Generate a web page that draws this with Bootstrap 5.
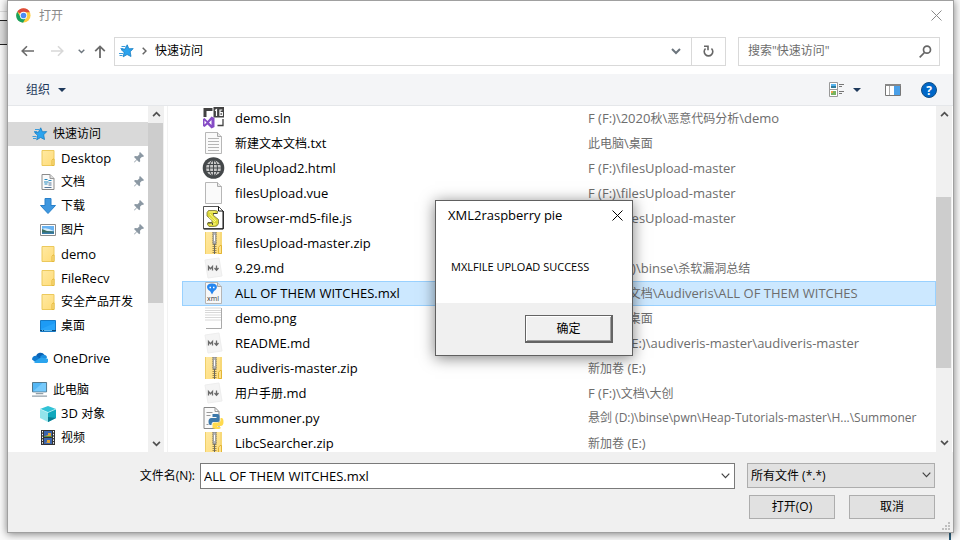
<!DOCTYPE html>
<html lang="zh-CN">
<head>
<meta charset="utf-8">
<meta name="viewport" content="width=device-width, initial-scale=1">
<title>打开</title>
<link rel="stylesheet" href="https://cdn.jsdelivr.net/npm/bootstrap@5.3.0/dist/css/bootstrap.min.css">
<style>
:root{--edge:#d9d9d9;--panel:#f0f0f0;--thumb:#cdcdcd;--navy:#1e395b}
body{font:13px/16px "Open Sans","Noto Sans CJK SC",sans-serif;color:#000;height:100vh;background:#fafafa;overflow:hidden}
button,input,select{font:inherit;color:inherit;border-radius:0}
svg{display:block;flex:none}
.stage{height:100%;padding:0 6px 7px 7px;background:#fafafa}
.back-line{top:11px;left:0;width:8px;height:1px;background:#ddd}
.back-button{top:20px;left:0;width:12px;height:25px;border:1px solid #222;border-left:0;background:#ddd}
.back-edge{bottom:0;right:9px;width:2px;height:8px;background:#2c5f7c}
.window{height:100%;background:#fff;border:1px solid #a0a0a0;box-shadow:0 1px 8px rgba(0,0,0,.5)}
.cjk,.files td.long-path{font-size:12px}
.title-bar{height:30px;padding:0 11px 0 8px;color:#8a8a8a}
.plain{border:0;background:none;padding:0}
.nav-row{height:44px;padding:6px 13px 8px 13px}
.arrows{width:93px;padding-right:8px}
.address{border:1px solid var(--edge)}
.address-path{padding-left:4px;padding-right:10px}
.refresh{width:34px;border-left:1px solid var(--edge)}
.search-box{width:202px;margin-left:12px;border:1px solid var(--edge);padding:0 7px 0 9px}
.search-box input{border:0;outline:0;padding:0;min-width:0;color:#6d6d6d}
.search-box input::placeholder{color:#6d6d6d;opacity:1}
.tool-bar{height:32px;background:#f4f5f7;border-bottom:1px solid #e5e7ea;color:var(--navy);padding:0 16px 0 18px}
.main-area{min-height:0;padding-right:1px}
.side{width:140px;padding-top:16px}
.side a{display:flex;align-items:center;height:24px;color:#000;text-decoration:none;padding-left:32px;gap:5px;white-space:nowrap}
.side a.root{padding-left:24px}
.side a.current{background:#d9d9d9}
.side a.space{margin-top:8px}
.side .pin{margin-left:auto;margin-right:4px}
.scroll{width:16px;background:var(--panel)}
.scroll button{height:17px;color:#505050}
.thumb{background:var(--thumb);margin-right:1px}
.side-thumb{flex:180}.side-rest{flex:132}
.list-top{flex:74}.list-thumb{flex:171}.list-rest{flex:67}
.divider-line{width:4px;border-right:1px solid #f2f2f2}
.files{padding-left:14px}
.files table{table-layout:fixed;width:100%;border-collapse:collapse}
.files td{height:25px;padding:0;white-space:nowrap}
.files col.name{width:406px}
.files tr.picked{background:#cce8ff;outline:1px solid #99d1ff;outline-offset:-1px}
.files .item{display:flex;align-items:center;gap:10px;padding-left:20px}
.files td:last-child{color:#6d6d6d}
.bottom{background:var(--panel);padding:11px 18px 13px 16px;gap:6px}
.name-label{width:176px;text-align:right;padding-right:5px}
.name-box{height:26px;border:1px solid #7a7a7a;background:#fff;padding-right:4px}
.name-box input{border:0;outline:0;padding:0 3px;min-width:0}
.name-box button,.kind{color:#444}
.kind{position:relative;width:188px;margin-left:12px}
.kind select{appearance:none;width:100%;height:25px;border:1px solid #adadad;background:#e1e1e1;padding:0 3px}
.kind svg{position:absolute;right:4px;top:9px;pointer-events:none}
.pushes{gap:14px}
.push{width:86px;height:24px;border:1px solid #adadad;background:#e1e1e1;padding:0}
.grip{position:absolute;right:3px;bottom:2px}
.message{position:absolute;left:427px;top:199px;width:198px;background:#fff;border:1px solid #606060;box-shadow:0 2px 14px rgba(0,0,0,.5)}
.message header{padding:6px 9px 6px 12px}
.message p{padding:30px 15px 28px;margin:0;font-size:11px}
.message footer{background:var(--panel);padding:12px 19px}
.confirm{width:88px;height:28px;border:1px solid #646464;border-right-width:2px;border-bottom-width:2px;background:#f0f0f0;box-shadow:inset 1px 1px #fff,inset -1px -1px #a0a0a0;padding:0}
</style>
<script src="https://cdn.jsdelivr.net/npm/bootstrap@5.3.0/dist/js/bootstrap.bundle.min.js"></script>
</head>
<body>
<svg width="0" height="0" class="position-absolute" aria-hidden="true">
<defs><linearGradient id="fg" x2="1" y2="1"><stop stop-color="#ffe9a2"/><stop offset="1" stop-color="#ffdc78"/></linearGradient></defs>
<symbol id="i-star" viewBox="0 0 15 14"><path d="M8.2.8 9.9 4.800l4.300-.2-3 3.200.8 4.700-3.900-2-3.900 2.300.9-4.500-3-2.700 3.900-.5z" fill="#2ba3ee" stroke="#167cc2" stroke-width=".8"/><path d="M2.500 2.500h4M1.500 4.500h3M0 9.500h4M.5 11.500h3" stroke="#3b9cdd"/></symbol>
<symbol id="i-folder" viewBox="0 0 13 16"><path d="M.5.500h12v15H.5z" fill="url(#fg)" stroke="#ecc95c"/><path d="M10.500 15.500v-5l1-1.500h1v6.500z" fill="#ffe394" stroke="#e4b93b"/></symbol>
<symbol id="i-pin" viewBox="0 0 10 11"><path d="m6 0 4 4-1 1-1-.3-2 2 .2 2.500-1 1L2.900 7.900.500 10.500l-.5-.5 2.500-2.500L0 5l1-1 2.500.2 2-2L5.200 1z" fill="#8b98a3"/></symbol>
<symbol id="i-doc" viewBox="0 0 13 16"><path d="M.500.500h8l4 4v11H.5z" fill="#fafafa" stroke="#8b8b8b"/><path d="M8.500.500v4h4" fill="#ddd" stroke="#999"/><path d="M3 5.500h3M7 6.500h3M2.500 8h4.500M3 10h3" stroke="#2389bd"/><path d="M7 9h3M7 11h3M3 13.500h7" stroke="#579"/></symbol>
<symbol id="i-down" viewBox="0 0 16 16"><path d="M5 .5h6v7h4.500L8 15.500.5 7.500H5z" fill="#3e97df" stroke="#2880ca"/></symbol>
<symbol id="i-pic" viewBox="0 0 16 12"><path d="M.500.500h15v11H.5z" fill="#fff" stroke="#8c8c8c"/><path d="M2 2h12v8H2z" fill="#69b3f2"/><path d="M2 5q4-2 12 2H2z" fill="#d6edfb"/><path d="m2 5 5 2 7 .5V9H2z" fill="#3b6e62"/><path d="M2 8.500h12V10H2z" fill="#397dac"/></symbol>
<symbol id="i-desk" viewBox="0 0 16 12"><path d="M.500.500h15v11H.5z" fill="#1d9bf5" stroke="#167ac6"/><path d="M1 9 15 3v7H1z" fill="#35b0ff" opacity=".5"/><path d="M0 10.500h16" stroke="#0c4573"/><path d="M2 10.500h1m1 0h8" stroke="#65bbed"/></symbol>
<symbol id="i-cloud" viewBox="0 0 16 11"><path d="M4 4.500A4.600 4.600 0 0 1 12.500 3L9 8z" fill="#0a63b5"/><path d="M0 7.500A3.500 3.500 0 0 1 4.500 4L11 9H2z" fill="#0f7ad0"/><path d="M8 5c3-4 7-1.500 7 .5L11 9z" fill="#1b8fe0"/><path d="M1.500 10 9 5.500l6 1A2.400 2.400 0 0 1 13.500 11H3.500z" fill="#2aa4ee"/></symbol>
<symbol id="i-pc" viewBox="0 0 17 16"><path d="M.500.500h15v10H.5z" fill="#54b7f5" stroke="#4b7084"/><path d="m1 10 10-9h4v9z" fill="#85d1ff" opacity=".7"/><path d="M4 12.500h8M0 15h16" stroke="#92a0a9" stroke-width="1.300"/></symbol>
<symbol id="i-cube" viewBox="0 0 16 16"><path d="m8 0 8 3-8 3.500L0 3z" fill="#31c2d6"/><path d="m0 3 8 3.500V16L0 12z" fill="#93e4eb"/><path d="m16 3-8 3.500V16l8-4z" fill="#10a8bd"/><path d="m8 16 0-5 8 1z" fill="#087e93"/><path d="M0 3 8 6.500 16 3" fill="none" stroke="#c5f6fa" stroke-width=".7"/></symbol>
<symbol id="i-film" viewBox="0 0 14 15"><path d="M0 0h14v15H0z" fill="#333"/><path d="M1.500 1v14M12.500 1v14" stroke="#fff" stroke-dasharray="1.500 1.300"/><path d="M3 1h8v6H3zM3 8h8v6H3z" fill="#3b65ad"/><path d="M4 5h3V3h3v3H7zM4 12h2v-2h3v3H7z" fill="#e5a635"/><path d="M3 6h8v1H3z" fill="#5c9447"/></symbol>
<symbol id="i-sln" viewBox="0 0 22 22"><path d="M1 1h9v3H4v6H1zM11 0h10.500v10.500H11z" fill="#424242"/><path d="M12.500 3.500 14 2.500V9M19.800 3h-2.300V8.500h2.300V5.500h-2" fill="none" stroke="#fff" stroke-width="1.200"/><path d="M20.500 12v6.500H15" fill="none" stroke="#444" stroke-width="1.300"/><path d="m9 9.500 3 1.500v9l-3 1.500-4-4L2 20l-1.500-1v-7L2 11l3 3zM9 13l-2.500 2.500L9 18zM2 13.500v4l2-2z" fill="#864cc5" fill-rule="evenodd"/></symbol>
<symbol id="i-txt" viewBox="0 0 17 22"><path d="M.500.500h12l4 4v17H.5z" fill="#fafafa" stroke="#b7b7b7"/><path d="M12.500.500v4h4" fill="#e9e9e9" stroke="#aaa"/><path d="M3 6.500h11M3 9.500h11M3 12.500h11M3 15.500h11M3 18.500h11" stroke="#b5b5b5"/></symbol>
<symbol id="i-web" viewBox="0 0 22 22"><circle cx="11" cy="11" r="10.800" fill="#44484a"/><circle cx="11" cy="11" r="7.500" fill="#c8c8c8"/><g fill="none" stroke="#44484a"><ellipse cx="11" cy="11" rx="4" ry="7.500"/><path d="M11 3v16M3.500 11h15M4 7.500h14M4 14.500h14"/></g></symbol>
<symbol id="i-file" viewBox="0 0 17 22"><path d="M.500.500h12l4 4v17H.5z" fill="#fafafa" stroke="#b7b7b7"/><path d="M12.500.500v4h4" fill="#e9e9e9" stroke="#aaa"/></symbol>
<symbol id="i-js" viewBox="0 0 21 24"><path d="M.500.500h15l4.500 4.500v18H.5z" fill="#fff" stroke="#555"/><path d="M15.500.500V5H20M1 22.800h19.300V5" fill="none" stroke="#111"/><path d="M5.500 4.500h7q3 0 2 3h-4v2l5 4v4q-1 3-4 3H6q-3-3-1-4h4v-2L4 10V6.500z" fill="#ddd938" stroke="#77733a" stroke-width=".8"/><path d="M6 6h6M7 8l6 7M7 18h6M6 11l6 5" stroke="#fcf98b"/><path d="M10 7.500h4M5 17h4.500v2" fill="none" stroke="#333" stroke-width=".8"/></symbol>
<symbol id="i-zip" viewBox="0 0 17 22"><path d="M0 0h17v22H0z" fill="url(#fg)"/><path d="M.500 0v22M16 0v22" stroke="#efcf69"/><path d="M13.500 21.500v-6l1.500-2h1.500v8z" fill="#ffe28c" stroke="#e2b536"/><path d="M9.500 0v22" stroke="#a48b4c" stroke-width="4" stroke-dasharray="1 1"/><path d="M8 0h3v12H8z" fill="#b9b9b9" stroke="#777" stroke-width=".7"/><path d="M9.500 3v6" stroke="#fff"/><path d="M9.500 12v10" stroke="#686860"/></symbol>
<symbol id="i-md" viewBox="0 0 19 22"><path d="m1 3 14-2 3 18-14 2z" fill="#f4f4f4" stroke="#eee"/><path d="M4.500 13.500V9.500l2 2.200 2-2.200v4M12.500 8.500v4M10.500 11l2 2.300 2-2.300" fill="none" stroke="#6a6a6a" stroke-width="1.300"/></symbol>
<symbol id="i-png" viewBox="0 0 17 22"><path d="M0 .5h16v20H0z" fill="#fff"/><path d="M0 1h16M0 3.500h16M0 5.500h16M0 8h16M0 10.500h16M0 13h16" stroke="#d8d8d8"/><path d="M16.500 1v20.500H1" fill="none" stroke="#aaa"/></symbol>
<symbol id="i-py" viewBox="0 0 20 22"><path d="M.500.500h11l4 4v17H.5z" fill="#fafafa" stroke="#888"/><path d="M11.500.500v4h4M3 5.500h6M3 8.500h4M3 17.500h2" fill="none" stroke="#999"/><path d="M9 7h5q2 0 2 2v4q0 2-2 2h-4q-2 0-2 3H7q-2 0-2-3.500T8 11h5v-1H9z" fill="#3c78aa"/><path d="M17 11h1q2 0 2 4t-3 4h-3v1h3v1.500l-2 .5h-3l-3-1v-4q0-1.500 2-1.500h4q2 0 2-2z" fill="#ffda4e"/></symbol>
<symbol id="i-chev" viewBox="0 0 9 6"><path d="m.7.700 3.800 4 3.800-4" fill="none" stroke="currentColor" stroke-width="1.200"/></symbol>
<symbol id="i-bold" viewBox="0 0 10 7"><path d="m1 1 4 4 4-4" fill="none" stroke="currentColor" stroke-width="2"/></symbol>
<symbol id="i-up" viewBox="0 0 10 7"><path d="m1 6 4-4 4 4" fill="none" stroke="currentColor" stroke-width="2"/></symbol>
<symbol id="i-tri" viewBox="0 0 8 4"><path d="M0 0h8L4 4z" fill="#1e395b"/></symbol>
<symbol id="i-x" viewBox="0 0 11 11"><path d="m.5.500 10 10m0-10-10 10" stroke="currentColor"/></symbol>
</svg>
<div class="stage position-relative">
<div class="back-line position-absolute"></div><div class="back-button position-absolute"></div><div class="back-edge position-absolute"></div>
<div class="window position-relative d-flex flex-column">
  <header class="title-bar d-flex align-items-center">
    <svg width="15" height="15" viewBox="0 0 16 16"><circle cx="8" cy="8" r="7.500" fill="#ffcd40"/><path d="M8 8 1.300 4A7.700 7.700 0 0 1 14.800 4.500H8z" fill="#de4b3c"/><path d="m5 9.700-3.700-5.700A7.700 7.700 0 0 0 7.500 15.700L11 9.700z" fill="#19a15f"/><circle cx="8" cy="8" r="3.900" fill="#fff"/><circle cx="8" cy="8" r="3" fill="#4c8bf5"/></svg>
    <span class="cjk ms-1 ps-1">打开</span>
    <button class="plain ms-auto" aria-label="关闭"><svg width="11" height="11"><use href="#i-x"/></svg></button>
  </header>
  <div class="nav-row d-flex">
    <div class="arrows d-flex align-items-center justify-content-between flex-shrink-0">
      <button class="plain" aria-label="后退"><svg width="13" height="12" viewBox="0 0 13 12"><path d="M13 6H1.500M6 1.200 1.200 6 6 10.800" fill="none" stroke="#6b6b6b" stroke-width="1.600"/></svg></button>
      <button class="plain ms-2 ps-1" aria-label="前进"><svg width="13" height="12" viewBox="0 0 13 12"><path d="M0 6h11.500M7 1.200 11.800 6 7 10.800" fill="none" stroke="#d8d8d8" stroke-width="1.600"/></svg></button>
      <button class="plain ms-2 text-secondary" aria-label="最近位置"><svg width="7" height="5"><use href="#i-bold"/></svg></button>
      <button class="plain ms-1" aria-label="上移"><svg width="12" height="13" viewBox="0 0 12 13"><path d="M6 13V1.500M1.200 6.200 6 1.400l4.800 4.800" fill="none" stroke="#6b6b6b" stroke-width="1.800"/></svg></button>
    </div>
    <div class="address d-flex flex-fill">
      <div class="address-path d-flex align-items-center flex-fill">
        <svg width="15" height="14"><use href="#i-star"/></svg>
        <svg class="ms-2" width="5" height="8" viewBox="0 0 5 8"><path d="m.7.700 3.300 3.300L.7 7.300" fill="none" stroke="#666" stroke-width="1.500"/></svg>
        <span class="cjk ms-2">快速访问</span>
        <button class="plain ms-auto text-secondary" aria-label="展开"><svg width="10" height="7"><use href="#i-bold"/></svg></button>
      </div>
      <button class="plain refresh d-flex align-items-center justify-content-center" aria-label="刷新"><svg width="11" height="12" viewBox="0 0 11 12"><path d="M8.500 3.500A4.300 4.300 0 1 1 2.500 3.500M1 1.200h4v4" fill="none" stroke="#666" stroke-width="1.600"/></svg></button>
    </div>
    <label class="search-box d-flex align-items-center">
      <input class="cjk flex-fill" type="text" placeholder="搜索&quot;快速访问&quot;" aria-label="搜索">
      <svg width="13" height="13" viewBox="0 0 13 13"><circle cx="8" cy="4.700" r="3.500" fill="none" stroke="#666" stroke-width="1.700"/><path d="M5.500 7.500.700 12.300" stroke="#666" stroke-width="1.700"/></svg>
    </label>
  </div>
  <div class="tool-bar d-flex align-items-center">
    <button class="plain cjk d-flex align-items-center gap-2">组织 <svg width="8" height="4"><use href="#i-tri"/></svg></button>
    <button class="plain ms-auto d-flex align-items-center" aria-label="视图"><svg width="16" height="15" viewBox="0 0 16 15"><path d="M.500.500h8v14h-8zM.5 7.500h8" fill="#fff" stroke="#999"/><path d="M2 2h5v2H2z" fill="#56b3ee"/><path d="M2 4h5v2H2z" fill="#2f7a9b"/><path d="M2 9h5v4H2z" fill="#78b35f"/><path d="M2 9h2v2H2z" fill="#e9a34d"/><path d="M10 2.500h5M10 4.500h3M10 9.500h5M10 11.500h3" stroke="#777"/></svg><svg class="ms-2" width="8" height="4"><use href="#i-tri"/></svg></button>
    <button class="plain ms-4" aria-label="预览窗格"><svg width="16" height="12" viewBox="0 0 16 12"><path d="M.500.500h15v11H.5z" fill="#fff" stroke="#777"/><path d="M0 1h16" stroke="#888" stroke-width="2"/><path d="M4.500 2v9" stroke="#aaa"/><path d="M9 2h6v9H9z" fill="#4ba0e8"/></svg></button>
    <button class="plain ms-3 ps-1" aria-label="帮助"><svg width="16" height="16" viewBox="0 0 16 16"><circle cx="8" cy="8" r="7.500" fill="#0067c8" stroke="#124d82"/><text x="8" y="12.500" text-anchor="middle" font-size="12" font-weight="700" fill="#fff">?</text></svg></button>
  </div>
  <div class="main-area d-flex flex-fill overflow-hidden">
    <nav class="side flex-shrink-0 overflow-hidden" aria-label="位置">
      <a href="#" class="root current cjk"><svg width="16" height="14"><use href="#i-star"/></svg>快速访问</a>
      <a href="#"><svg width="16" height="16"><use href="#i-folder"/></svg>Desktop<svg class="pin" width="10" height="11"><use href="#i-pin"/></svg></a>
      <a href="#" class="cjk"><svg width="16" height="16"><use href="#i-doc"/></svg>文档<svg class="pin" width="10" height="11"><use href="#i-pin"/></svg></a>
      <a href="#" class="cjk"><svg width="16" height="16"><use href="#i-down"/></svg>下载<svg class="pin" width="10" height="11"><use href="#i-pin"/></svg></a>
      <a href="#" class="cjk"><svg width="16" height="12"><use href="#i-pic"/></svg>图片<svg class="pin" width="10" height="11"><use href="#i-pin"/></svg></a>
      <a href="#"><svg width="16" height="16"><use href="#i-folder"/></svg>demo</a>
      <a href="#"><svg width="16" height="16"><use href="#i-folder"/></svg>FileRecv</a>
      <a href="#" class="cjk"><svg width="16" height="16"><use href="#i-folder"/></svg>安全产品开发</a>
      <a href="#" class="cjk"><svg width="16" height="12"><use href="#i-desk"/></svg>桌面</a>
      <a href="#" class="root space"><svg width="16" height="11"><use href="#i-cloud"/></svg>OneDrive</a>
      <a href="#" class="root space cjk"><svg width="16" height="15"><use href="#i-pc"/></svg>此电脑</a>
      <a href="#"><svg width="16" height="16"><use href="#i-cube"/></svg><span>3D <span class="cjk">对象</span></span></a>
      <a href="#" class="cjk"><svg width="16" height="15"><use href="#i-film"/></svg>视频</a>
    </nav>
    <div class="scroll d-flex flex-column flex-shrink-0">
      <button class="plain d-flex align-items-center justify-content-center" aria-label="向上"><svg width="9" height="6"><use href="#i-up"/></svg></button>
      <div class="thumb side-thumb"></div><div class="side-rest"></div>
      <button class="plain d-flex align-items-center justify-content-center" aria-label="向下"><svg width="9" height="6"><use href="#i-bold"/></svg></button>
    </div>
    <div class="divider-line flex-shrink-0"></div>
    <div class="files flex-fill overflow-hidden">
      <table>
        <colgroup><col class="name"><col></colgroup>
        <tbody>
        <tr><td><div class="item"><svg width="23" height="22"><use href="#i-sln"/></svg>demo.sln</div></td><td>F (F:)\2020<span class="cjk">秋</span>\<span class="cjk">恶意代码分析</span>\demo</td></tr>
        <tr><td><div class="item"><svg width="23" height="22"><use href="#i-txt"/></svg><span><span class="cjk">新建文本文档</span>.txt</span></div></td><td><span class="cjk">此电脑</span>\<span class="cjk">桌面</span></td></tr>
        <tr><td><div class="item"><svg width="23" height="22"><use href="#i-web"/></svg>fileUpload2.html</div></td><td>F (F:)\filesUpload-master</td></tr>
        <tr><td><div class="item"><svg width="23" height="22"><use href="#i-file"/></svg>filesUpload.vue</div></td><td>F (F:)\filesUpload-master</td></tr>
        <tr><td><div class="item"><svg width="23" height="24"><use href="#i-js"/></svg>browser-md5-file.js</div></td><td>F (F:)\filesUpload-master</td></tr>
        <tr><td><div class="item"><svg width="23" height="22"><use href="#i-zip"/></svg>filesUpload-master.zip</div></td><td>F (F:)</td></tr>
        <tr><td><div class="item"><svg width="23" height="22"><use href="#i-md"/></svg>9.29.md</div></td><td><span class="cjk">悬剑</span> (D:)\binse\<span class="cjk">杀软漏洞总结</span></td></tr>
        <tr class="picked"><td><div class="item"><svg width="23" height="22" viewBox="-3 0 23 22"><path d="M.500.500h12l4 4v17H.5z" fill="#f8f8f8" stroke="#b5b5b5"/><path d="M12.500.500v4h4" fill="#ddd" stroke="#aaa"/><path d="M7 1.500c-7 0-5.500 6-2 7.500L7 12.500 9 9c3.500-1.500 5-7.500-2-7.500z" fill="#2687f0"/><path d="M4.500 5.500h1.500m2 0h1.500" stroke="#fff" stroke-width="1.500"/><text x="2" y="19" font-size="7" fill="#333">xml</text></svg>ALL OF THEM WITCHES.mxl</div></td><td><span class="cjk">此电脑</span>\<span class="cjk">文档</span>\Audiveris\ALL OF THEM WITCHES</td></tr>
        <tr><td><div class="item"><svg width="23" height="22"><use href="#i-png"/></svg>demo.png</div></td><td><span class="cjk">此电脑</span>\<span class="cjk">桌面</span></td></tr>
        <tr><td><div class="item"><svg width="23" height="22"><use href="#i-md"/></svg>README.md</div></td><td><span class="cjk">新加卷</span> (E:)\audiveris-master\audiveris-master</td></tr>
        <tr><td><div class="item"><svg width="23" height="22"><use href="#i-zip"/></svg>audiveris-master.zip</div></td><td><span class="cjk">新加卷</span> (E:)</td></tr>
        <tr><td><div class="item"><svg width="23" height="22"><use href="#i-md"/></svg><span><span class="cjk">用户手册</span>.md</span></div></td><td>F (F:)\<span class="cjk">文档</span>\<span class="cjk">大创</span></td></tr>
        <tr><td><div class="item"><svg width="23" height="22"><use href="#i-py"/></svg>summoner.py</div></td><td class="long-path">悬剑 (D:)\binse\pwn\Heap-Tutorials-master\H...\Summoner</td></tr>
        <tr><td><div class="item"><svg width="23" height="22"><use href="#i-zip"/></svg>LibcSearcher.zip</div></td><td><span class="cjk">新加卷</span> (E:)</td></tr>
        </tbody>
      </table>
    </div>
    <div class="scroll d-flex flex-column flex-shrink-0">
      <button class="plain d-flex align-items-center justify-content-center" aria-label="向上"><svg width="9" height="6"><use href="#i-up"/></svg></button>
      <div class="list-top"></div><div class="thumb list-thumb"></div><div class="list-rest"></div>
      <button class="plain d-flex align-items-center justify-content-center" aria-label="向下"><svg width="9" height="6"><use href="#i-bold"/></svg></button>
    </div>
  </div>
  <footer class="bottom d-flex flex-column position-relative">
    <div class="d-flex">
      <label class="name-label cjk flex-shrink-0 align-self-center" for="fname">文件名(N):</label>
      <div class="name-box d-flex align-items-center flex-fill"><input id="fname" class="flex-fill" type="text" value="ALL OF THEM WITCHES.mxl"><button class="plain" aria-label="历史"><svg width="9" height="6"><use href="#i-chev"/></svg></button></div>
      <div class="kind flex-shrink-0"><select class="cjk text-black" aria-label="文件类型"><option>所有文件 (*.*)</option></select><svg width="9" height="6"><use href="#i-chev"/></svg></div>
    </div>
    <div class="pushes d-flex justify-content-end"><button class="push cjk">打开(O)</button><button class="push cjk">取消</button></div>
    <svg class="grip" width="8" height="8" viewBox="0 0 8 8"><path d="M6 0h2v2H6zM3 3h2v2H3zM6 3h2v2H6zM0 6h2v2H0zM3 6h2v2H3zM6 6h2v2H6z" fill="#bfbfbf"/></svg>
  </footer>
  <section class="message" role="dialog" aria-labelledby="msgtitle">
    <header class="d-flex align-items-center justify-content-between"><span id="msgtitle">XML2raspberry pie</span><button class="plain" aria-label="关闭"><svg width="11" height="11"><use href="#i-x"/></svg></button></header>
    <p>MXLFILE UPLOAD SUCCESS</p>
    <footer class="d-flex justify-content-end"><button class="confirm cjk">确定</button></footer>
  </section>
</div>
</div>
</body>
</html>
